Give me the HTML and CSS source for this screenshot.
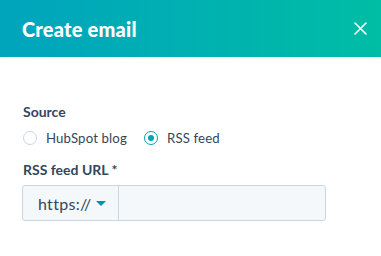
FILE: index.html
```html
<!DOCTYPE html>
<html>
<head>
<meta charset="utf-8">
<link rel="stylesheet" href="styles.css">
</head>
<body>
<div class="dialog">
  <header class="header">
    <h1 class="title">Create email</h1>
    <button class="close" aria-label="Close">
      <svg width="13" height="13" viewBox="0 0 13 13"><path d="M1 1L12 12M12 1L1 12" stroke="#fff" stroke-width="1.6" stroke-linecap="round"/></svg>
    </button>
  </header>
  <main class="content">
    <div class="field">
      <div class="label">Source</div>
      <div class="radios">
        <label class="radio"><span class="circle"></span><span>HubSpot blog</span></label>
        <label class="radio"><span class="circle checked"></span><span>RSS feed</span></label>
      </div>
    </div>
    <div class="field url-field">
      <div class="label">RSS feed URL *</div>
      <div class="input-group">
        <div class="protocol">https:// <span class="caret"></span></div>
        <div class="url-input"></div>
      </div>
    </div>
  </main>
</div>
</body>
</html>
```
FILE: styles.css
```css
* { box-sizing: border-box; }
html, body { margin: 0; padding: 0; background: #fff; }
body { font-family: Lato, "Liberation Sans", sans-serif; color: #33475b; width: 381px; height: 256px; overflow: hidden; }
.header {
  height: 57px;
  background: linear-gradient(90deg, #00a4bd 0%, #00bda5 100%);
  display: flex;
  align-items: center;
  justify-content: space-between;
  padding: 0 9px 0 22px;
}
.title { margin: 0; font-size: 20px; font-weight: 900; color: #fff; letter-spacing: 0.2px; }
.close { background: none; border: 0; padding: 0; width: 24px; height: 24px; display: flex; align-items: center; justify-content: center; }
.content { padding: 46px 23px 0; }
.label { font-size: 14px; font-weight: 700; line-height: 18px; }
.radios { display: flex; gap: 17px; margin-top: 8px; }
.radio { display: flex; align-items: center; gap: 9px; font-size: 13.2px; line-height: 18px; letter-spacing: 0.15px; }
.circle { width: 14px; height: 14px; border-radius: 50%; border: 1px solid #cbd6e2; background: #fff; display: inline-block; position: relative; flex: none; }
.circle.checked { border-color: #00a4bd; }
.circle.checked::after { content: ""; position: absolute; left: 3px; top: 3px; width: 6px; height: 6px; border-radius: 50%; background: #00a4bd; }
.url-field { margin-top: 14px; }
.input-group { margin-top: 6px; margin-left: -1px; width: 304px; height: 36px; display: flex; border: 1px solid #cbd6e2; border-radius: 3px; background: #f5f8fa; }
.protocol { width: 96px; border-right: 1px solid #cbd6e2; display: flex; align-items: center; padding-left: 15px; font-size: 16px; letter-spacing: 0.3px; gap: 5px; }
.caret { width: 0; height: 0; border-left: 5px solid transparent; border-right: 5px solid transparent; border-top: 5px solid #0091ae; }
.url-input { flex: 1; }
```
